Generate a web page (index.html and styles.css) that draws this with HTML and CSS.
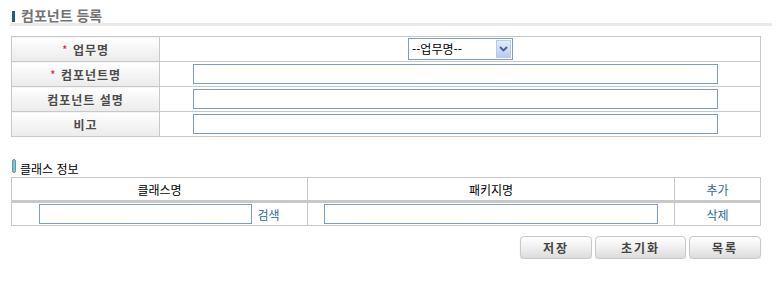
FILE: index.html
```html
<!DOCTYPE html>
<html lang="ko">
<head>
<meta charset="utf-8">
<link rel="stylesheet" href="styles.css">
</head>
<body>
<div class="page">
  <h2 class="title">컴포넌트 등록</h2>
  <table class="form">
    <tr>
      <th><span class="req">*</span> 업무명</th>
      <td class="center">
        <div class="select"><span class="sel-text">--업무명--</span><span class="sel-btn"><svg width="9" height="6" viewBox="0 0 9 6"><path d="M1 1 L4.5 4.5 L8 1" fill="none" stroke="#4a5f8a" stroke-width="1.8"/></svg></span></div>
      </td>
    </tr>
    <tr>
      <th><span class="req">*</span> 컴포넌트명</th>
      <td class="field"><input type="text" class="txt wide"></td>
    </tr>
    <tr>
      <th>컴포넌트 설명</th>
      <td class="field"><input type="text" class="txt wide"></td>
    </tr>
    <tr>
      <th>비고</th>
      <td class="field"><input type="text" class="txt wide"></td>
    </tr>
  </table>

  <h3 class="sub"><span class="pill"></span>클래스 정보</h3>
  <table class="list">
    <tr class="head">
      <td class="c1">클래스명</td>
      <td class="c2">패키지명</td>
      <td class="c3"><a href="#">추가</a></td>
    </tr>
    <tr>
      <td class="c1"><input type="text" class="txt cls"><a href="#" class="search">검색</a></td>
      <td class="c2"><input type="text" class="txt pkg"></td>
      <td class="c3"><a href="#">삭제</a></td>
    </tr>
  </table>

  <div class="buttons">
    <button class="btn b1">저장</button>
    <button class="btn b2">초기화</button>
    <button class="btn b3">목록</button>
  </div>
</div>
</body>
</html>
```

FILE: styles.css
```css
html, body {
  margin: 0;
  padding: 0;
  background: #fff;
}
body {
  font-family: "Noto Sans CJK KR", "Noto Sans", sans-serif;
  font-size: 12px;
  color: #000;
}
.page {
  width: 760px;
  padding: 8px 0 0 10px;
}
.title {
  margin: 0 0 10px 0;
  width: 760px;
  height: 15px;
  padding: 0 0 0 2px;
  border-bottom: 3px solid #e9e9e9;
  font-size: 14px;
  line-height: 15px;
  font-weight: bold;
  color: #737373;
  display: flex;
  align-items: center;
  box-sizing: content-box;
}
.title::before {
  content: "";
  display: block;
  width: 3px;
  height: 11px;
  background: #1f5b8c;
  margin: 2px 6px 0 0;
}
table {
  border-collapse: collapse;
  margin-left: 1px;
}
.form {
  width: 750px;
}
.form th, .form td {
  border: 1px solid #c8c8c8;
  height: 24px;
  padding: 0;
}
.form th {
  width: 147px;
  font-weight: bold;
  color: #4c4c4c;
  background: linear-gradient(#ffffff, #ebebeb);
  text-align: center;
  letter-spacing: 1px;
}
.req {
  color: #d03030;
  font-weight: normal;
}
.center {
  text-align: center;
}
.field {
  padding-left: 33px !important;
}
.select {
  display: inline-flex;
  align-items: center;
  width: 103px;
  height: 20px;
  border: 1px solid #7f9db9;
  background: #fff;
  vertical-align: middle;
  margin-left: 1px;
}
.sel-text {
  flex: 1;
  text-align: left;
  padding-left: 3px;
  font-size: 12px;
  line-height: 18px;
}
.sel-btn {
  width: 15px;
  height: 18px;
  margin-right: 1px;
  border: 1px solid #b8cbea;
  background: linear-gradient(#e3ecfc, #b6cbf3);
  display: flex;
  align-items: center;
  justify-content: center;
  box-sizing: border-box;
}
.txt {
  height: 20px;
  border: 1px solid #7f9db9;
  padding: 0;
  margin: 0;
  box-sizing: border-box;
  vertical-align: middle;
  font-family: inherit;
  font-size: 12px;
}
.wide {
  width: 525px;
}
.sub {
  margin: 22px 0 0 0;
  height: 18px;
  font-size: 12px;
  font-weight: normal;
  color: #000;
  display: flex;
  align-items: center;
  padding-left: 2px;
}
.pill {
  width: 4px;
  height: 14px;
  border-radius: 2px;
  background: linear-gradient(90deg, #4fa8bb, #a9dde8 60%, #5aa9ba);
  border: 1px solid #5a9aa8;
  margin: -4px 4px 0 0;
  box-sizing: border-box;
}
.list {
  width: 750px;
}
.list td {
  border: 1px solid #c8c8c8;
  padding: 0;
  text-align: center;
  height: 22px;
}
.list tr.head td {
  height: 22px;
  border-bottom: 3px solid #c8c8c8;
}
.list .c1 {
  width: 295px;
}
.list .c2 {
  width: 366px;
}
a {
  color: #2e6a9a;
  text-decoration: none;
}
.cls {
  width: 213px;
  margin-right: 5px;
}
.search {
  vertical-align: middle;
}
.pkg {
  width: 334px;
  margin-left: -1px;
}
.buttons {
  display: flex;
  justify-content: flex-end;
  gap: 3px;
  width: 751px;
  margin-top: 10px;
}
.btn {
  height: 23px;
  border: 1px solid #c9c9c9;
  border-radius: 4px;
  background: linear-gradient(#ffffff, #f3f3f3 40%, #dcdcdc);
  font-family: inherit;
  font-size: 12px;
  font-weight: bold;
  color: #444;
  letter-spacing: 2px;
  padding: 0;
  box-shadow: 0 1px 1px rgba(0,0,0,0.15);
}
.b1 { width: 72px; }
.b2 { width: 91px; }
.b3 { width: 72px; }
```
